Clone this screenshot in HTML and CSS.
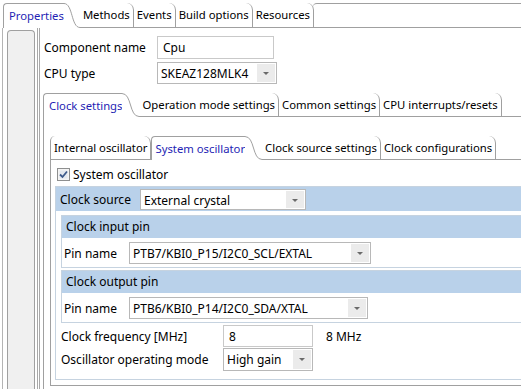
FILE: index.html
```html
<!DOCTYPE html>
<html lang="en">
<head>
    <meta charset="UTF-8">
    <title>Cpu Properties</title>
    <link rel="stylesheet" href="styles.css">
</head>
<body>
    <div class="strip top">
        <div class="tab sel first">Properties</div>
        <svg class="slant" width="16" height="25" viewBox="0 0 16 25"><path d="M0 0.5 C9 0.5 7 24.5 16 24.5 L16 25 L0 25 Z" fill="#fff"/><path d="M0 0.5 C9 0.5 7 24.5 16 24.5" fill="none" stroke="#a0a0a0"/></svg>
        <div class="tab">Methods</div>
        <div class="tab">Events</div>
        <div class="tab">Build options</div>
        <div class="tab">Resources</div>
        <div class="fill"></div>
    </div>

    <div class="frame">
        <div class="side"></div>
        <div class="main">
            <div class="row">
                <span class="label">Component name</span>
                <div class="field name">Cpu</div>
            </div>
            <div class="row">
                <span class="label">CPU type</span>
                <div class="select cpu"><span class="value">SKEAZ128MLK4</span><span class="arrow"></span></div>
            </div>

            <div class="folder clock">
                <div class="strip">
                    <div class="tab sel first">Clock settings</div>
                    <svg class="slant" width="17" height="24" viewBox="0 0 17 24"><path d="M0 0.5 C10 0.5 7 23.5 17 23.5 L17 24 L0 24 Z" fill="#fff"/><path d="M0 0.5 C10 0.5 7 23.5 17 23.5" fill="none" stroke="#a0a0a0"/></svg>
                    <div class="tab">Operation mode settings</div>
                    <div class="tab">Common settings</div>
                    <div class="tab">CPU interrupts/resets</div>
                    <div class="fill"></div>
                </div>
                <div class="panel outer">
                    <div class="folder osc">
                        <div class="strip">
                            <div class="tab first">Internal oscillator</div>
                            <div class="tab sel">System oscillator</div>
                            <svg class="slant" width="17" height="24" viewBox="0 0 17 24"><path d="M0 0.5 C10 0.5 7 23.5 17 23.5 L17 24 L0 24 Z" fill="#fff"/><path d="M0 0.5 C10 0.5 7 23.5 17 23.5" fill="none" stroke="#a0a0a0"/></svg>
                            <div class="tab">Clock source settings</div>
                            <div class="tab">Clock configurations</div>
                            <div class="fill"></div>
                        </div>
                        <div class="panel inner">
                            <label class="check">
                                <svg width="13" height="13" viewBox="0 0 13 13"><rect x="0.5" y="0.5" width="12" height="12" fill="#f4f4f4" stroke="#8e8f8f"/><rect x="2.5" y="2.5" width="8" height="8" fill="#e4e8ee"/><path d="M3 6.5 L5.5 9 L10 3.5" fill="none" stroke="#3d5a8a" stroke-width="1.8"/></svg>
                                System oscillator
                            </label>

                            <div class="group source">
                                <div class="bar">
                                    <span class="bar-label">Clock source</span>
                                    <div class="select src"><span class="value">External crystal</span><span class="arrow"></span></div>
                                </div>

                                <div class="group pin">
                                    <div class="head">Clock input pin</div>
                                    <div class="pin-row">
                                        <span class="pin-label">Pin name</span>
                                        <div class="select pin-in"><span class="value">PTB7/KBI0_P15/I2C0_SCL/EXTAL</span><span class="arrow"></span></div>
                                    </div>
                                </div>

                                <div class="group pin">
                                    <div class="head">Clock output pin</div>
                                    <div class="pin-row">
                                        <span class="pin-label">Pin name</span>
                                        <div class="select pin-out"><span class="value">PTB6/KBI0_P14/I2C0_SDA/XTAL</span><span class="arrow"></span></div>
                                    </div>
                                </div>

                                <div class="row freq">
                                    <span class="label wide">Clock frequency [MHz]</span>
                                    <div class="field mhz">8</div>
                                    <span class="unit">8 MHz</span>
                                </div>
                                <div class="row mode">
                                    <span class="label wide">Oscillator operating mode</span>
                                    <div class="select gain"><span class="value">High gain</span><span class="arrow"></span></div>
                                </div>
                            </div>
                        </div>
                    </div>
                </div>
            </div>
        </div>
    </div>
</body>
</html>
```

FILE: styles.css
```css
* {
    box-sizing: border-box;
}

body {
    margin: 0;
    height: 389px;
    overflow: hidden;
    background: #fff;
    font-family: "Noto Sans", "Open Sans", sans-serif;
    font-size: 12px;
    color: #000;
    display: flex;
    flex-direction: column;
}

/* tab strips */
.strip {
    display: flex;
    height: 24px;
    flex-shrink: 0;
}
.strip.top {
    height: 25px;
    margin-top: 3px;
    padding-left: 3px;
}
.tab {
    display: flex;
    align-items: center;
    padding: 0 3px 1px 3px;
    font-size: 11.3px;
    border-bottom: 1px solid #a0a0a0;
    border-right: 1px solid #a0a0a0;
    border-top-right-radius: 7px;
    white-space: nowrap;
}
.tab.first {
    border-left: 1px solid #a0a0a0;
    border-top-left-radius: 5px;
}
.tab.sel {
    color: #1f1fb4;
    border: 1px solid #a0a0a0;
    border-right: none;
    border-bottom: none;
    border-radius: 4px 0 0 0;
    padding-right: 0;
}
.tab.sel.first {
    padding-left: 5px;
}
.slant {
    flex-shrink: 0;
    display: block;
}
.fill {
    flex: 1;
    border-bottom: 1px solid #a0a0a0;
}
.strip.top .fill {
    border-top: 1px solid #a0a0a0;
    border-top-left-radius: 4px;
    margin-left: -1px;
}

/* page frame */
.frame {
    flex: 1;
    display: flex;
    margin-left: 2px;
    border-left: 1px solid #b4b4b4;
}
.side {
    width: 28px;
    margin: 2px 0 0 4px;
    background: #f0f0f0;
    border: 1px solid #a0a0a0;
    border-bottom: none;
    border-radius: 4px 4px 0 0;
}
.main {
    flex: 1;
    margin-left: 2px;
    border-left: 3px double #a8a8a8;
    padding: 8px 0 0 4px;
    display: flex;
    flex-direction: column;
    min-width: 0;
}

.row {
    display: flex;
    align-items: center;
    margin-bottom: 3px;
}
.label {
    width: 113px;
    flex-shrink: 0;
}
.label.wide {
    width: 162px;
}

.field {
    height: 23px;
    border: 1px solid #c9c9c9;
    padding: 2px 5px;
    background: #fff;
}
.field.name {
    width: 117px;
}
.field.mhz {
    width: 90px;
    height: 22px;
}
.unit {
    margin-left: 13px;
}

.select {
    display: flex;
    height: 22px;
    border: 1px solid #b8b8b8;
    background: #fff;
}
.select .value {
    flex: 1;
    padding: 2px 3px;
    white-space: nowrap;
    overflow: hidden;
}
.select .arrow {
    width: 18px;
    margin: 1px;
    background: #ebebeb;
    position: relative;
}
.select .arrow::after {
    content: "";
    position: absolute;
    left: 6px;
    top: 8px;
    border-left: 3px solid transparent;
    border-right: 3px solid transparent;
    border-top: 3px solid #6a6a6a;
}
.select.cpu {
    width: 120px;
}

/* nested folders */
.folder.clock {
    margin: 6px 0 0 -1px;
    flex: 1;
    display: flex;
    flex-direction: column;
}
.panel.outer {
    flex: 1;
    border-left: 1px solid #a0a0a0;
    padding: 19px 0 0 6px;
}
.folder.osc {
    display: flex;
    flex-direction: column;
}
.panel.inner {
    border-left: 1px solid #a0a0a0;
    border-bottom: 1px solid #a0a0a0;
    padding: 5px 0 5px 4px;
}

.check {
    display: flex;
    align-items: center;
    gap: 3px;
    height: 18px;
    margin: 0 0 3px 2px;
}
.check svg {
    display: block;
}

.group.source {
    border: 1px solid #c6d3e0;
    border-right: none;
    padding: 0 0 8px 0;
}
.bar {
    display: flex;
    align-items: center;
    height: 24px;
    background: #b9d1ea;
    padding-left: 4px;
}
.bar-label {
    width: 80px;
}
.select.src {
    width: 166px;
    height: 21px;
}

.group.pin {
    margin: 4px 0 0 5px;
    border: 1px solid #c6d3e0;
    border-right: none;
}
.group.pin + .group.pin {
    margin-top: 2px;
}
.head {
    height: 22px;
    background: #b9d1ea;
    padding: 2px 0 0 4px;
}
.pin-row {
    display: flex;
    align-items: center;
    padding: 4px 0 3px 2px;
}
.pin-label {
    width: 65px;
}
.select.pin-in {
    width: 242px;
}
.select.pin-out {
    width: 239px;
}

.row.freq {
    margin: 2px 0 1px 5px;
}
.row.mode {
    margin: 0 0 0 5px;
}
.select.gain {
    width: 90px;
    height: 23px;
}
```
